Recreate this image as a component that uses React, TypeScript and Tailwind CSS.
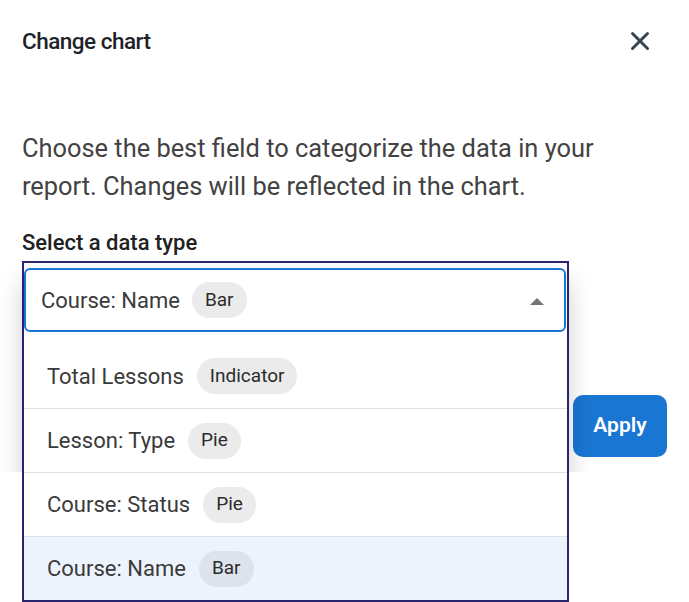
import { X } from "lucide-react"

const options = [
  { label: "Total Lessons", chart: "Indicator" },
  { label: "Lesson: Type", chart: "Pie" },
  { label: "Course: Status", chart: "Pie" },
  { label: "Course: Name", chart: "Bar", selected: true },
]

function Chip({ text, selected }: { text: string; selected?: boolean }) {
  return (
    <span
      className={`inline-flex h-[36px] items-center rounded-full px-[13px] text-[19px] text-[#2b2b2b] ${
        selected ? "bg-[#dde3ea]" : "bg-[#ebebeb]"
      }`}
    >
      {text}
    </span>
  )
}

export default function App() {
  return (
    <div className="relative h-[602px] w-[689px] overflow-hidden bg-white font-['Roboto',sans-serif]">
      {/* Dialog */}
      <div className="relative h-[472px] overflow-hidden bg-white px-[22px]">
        {/* shadow of the open menu, cut where the dialog ends */}
        <div className="absolute left-[24px] top-[276px] h-[340px] w-[543px] shadow-[0_6px_24px_rgba(0,0,0,0.22)]" />

        <div className="flex items-center justify-between pt-[24px]">
          <h2 className="text-[22.5px] font-medium leading-[34px] tracking-[-0.5px] text-[#1f2328]">Change chart</h2>
          <button className="mr-[12px] text-[#37474f]">
            <X size={30} strokeWidth={2.4} />
          </button>
        </div>

        <p className="mt-[71px] max-w-[610px] text-[25.4px] leading-[38px] text-[#424242]">
          Choose the best field to categorize the data in your report. Changes will be reflected in the chart.
        </p>

        <label className="mt-[25px] block text-[22px] font-medium leading-[26px] text-[#212121]">
          Select a data type
        </label>

        <div className="relative ml-[2px] mt-[12px] flex h-[64px] w-[542px] items-center gap-[12px] rounded-[6px] border-2 border-[#1976d2] bg-white pl-[15px]">
          <span className="text-[22px] text-[#3a3a3a]">Course: Name</span>
          <Chip text="Bar" />
          <span className="absolute right-[20px] top-[28px] h-0 w-0 border-x-[7px] border-b-[7px] border-x-transparent border-b-[#757575]" />
        </div>

        <div className="mt-[63px] flex justify-end">
          <button className="h-[62px] w-[94px] rounded-[10px] bg-[#1976d2] text-[21px] font-semibold text-white">
            Apply
          </button>
        </div>
      </div>

      {/* Open menu */}
      <ul className="absolute left-[24px] top-[332px] w-[543px] bg-white pt-[12px]">
        {options.map((o, i) => (
          <li
            key={o.label}
            className={`flex h-[64px] items-center gap-[13px] pl-[23px] ${
              i > 0 ? "border-t border-[#e0e0e0]" : ""
            } ${o.selected ? "bg-[#edf3fc]" : ""}`}
          >
            <span className="text-[22px] text-[#3a3a3a]">{o.label}</span>
            <Chip text={o.chart} selected={o.selected} />
          </li>
        ))}
      </ul>

      {/* annotation outline */}
      <div className="pointer-events-none absolute left-[22px] top-[261px] h-[341px] w-[547px] border-2 border-[#28246e]" />
    </div>
  )
}
